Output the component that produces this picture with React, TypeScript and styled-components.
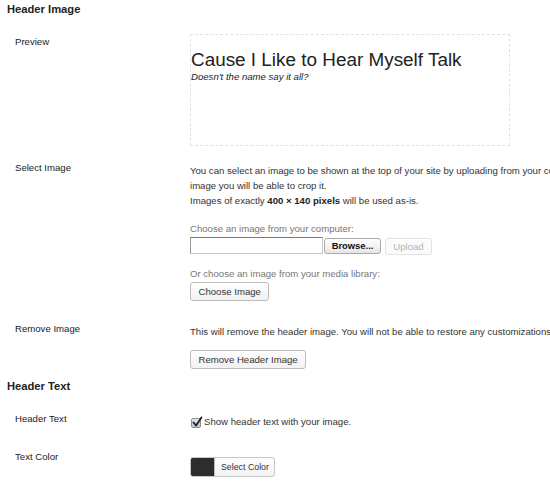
import { ReactElement, PropsWithChildren } from 'react';
import styled, { createGlobalStyle } from 'styled-components';

const GlobalStyle = createGlobalStyle`
  html,
  body {
    margin: 0;
    padding: 0;
    background: #fff;
    overflow: hidden;
  }
  body {
    font-family: 'Liberation Sans', Arial, sans-serif;
    font-size: 9.6px;
    color: #333;
  }
`;

const Page = styled.div`
  padding: 2px 0 0 7px;
  width: 900px;
`;

const Heading = styled.h3`
  margin: 0 0 11px;
  font-size: 11.2px;
  line-height: 14px;
  font-weight: bold;
  color: #222;
`;

const RowWrap = styled.div`
  display: grid;
  grid-template-columns: 175px 1fr;
  padding: 7px 0 7px 8px;
`;

const Label = styled.div`
  line-height: 15px;
  color: #222;
`;

const Field = styled.div`
  min-width: 0;
`;

interface IRowProps {
  label: string;
}

function Row({ label, children }: PropsWithChildren<IRowProps>): ReactElement {
  return (
    <RowWrap>
      <Label>{label}</Label>
      <Field>{children}</Field>
    </RowWrap>
  );
}

const PreviewBox = styled.div`
  box-sizing: border-box;
  width: 320px;
  height: 112px;
  border: 1px dashed #e2e2e2;
  padding-top: 14px;
`;

const SiteTitle = styled.div`
  font-size: 18.9px;
  line-height: 22px;
  color: #222;
`;

const SiteTagline = styled.div`
  font-size: 9.6px;
  line-height: 12px;
  font-style: italic;
  color: #222;
`;

const Desc = styled.p`
  margin: 3px 0 0;
  line-height: 15px;
  white-space: nowrap;
  color: #333;

  strong {
    color: #222;
  }
`;

const Hint = styled.p<{ $mt: number }>`
  margin: ${(p) => p.$mt}px 0 0;
  line-height: 15px;
  color: #777;
`;

const Actions = styled.div<{ $mt: number; $mb: number }>`
  display: flex;
  align-items: flex-start;
  margin: ${(p) => p.$mt}px 0 ${(p) => p.$mb}px;
`;

const FileBox = styled.div`
  box-sizing: border-box;
  width: 133px;
  height: 17px;
  border: 1px solid #c8c8c8;
  border-top-color: #7a7a7a;
  border-left-color: #9a9a9a;
  background: #fff;
`;

const BrowseButton = styled.div`
  box-sizing: border-box;
  width: 57px;
  height: 16px;
  margin: 1px 0 0 1px;
  border: 1px solid #a9a9a9;
  border-radius: 3px;
  background: linear-gradient(#ffffff, #e6e6e6);
  font-weight: bold;
  font-size: 9.4px;
  line-height: 14px;
  text-align: center;
  color: #111;
`;

const Button = styled.div<{ $disabled?: boolean }>`
  box-sizing: border-box;
  display: inline-block;
  height: 19px;
  padding: 0 7.5px;
  border: 1px solid ${(p) => (p.$disabled ? '#e2e2e2' : '#bdbdbd')};
  border-radius: 3px;
  background: ${(p) =>
    p.$disabled ? '#fbfbfb' : 'linear-gradient(#fefefe, #f2f2f2)'};
  box-shadow: inset 0 1px 0 #fff;
  line-height: 17px;
  font-size: 9.6px;
  color: ${(p) => (p.$disabled ? '#b4b4b4' : '#333')};
  white-space: nowrap;
`;

const UploadButton = styled(Button)`
  margin: 1px 0 0 4px;
  width: 47px;
  height: 17px;
  line-height: 15px;
  text-align: center;
  padding: 0;
`;

const CheckLine = styled.p`
  margin: 3px 0 6px;
  line-height: 15px;
  display: flex;
  align-items: center;
  color: #333;
`;

const CheckBox = styled.span`
  position: relative;
  box-sizing: border-box;
  width: 10px;
  height: 10px;
  margin: 2px 3px 0 1px;
  border: 1px solid #8a8f99;
  border-radius: 2px;
  background: linear-gradient(#e4e8ef, #b9c2d0);

  svg {
    position: absolute;
    left: -1px;
    top: -3px;
  }
`;

const ColorPicker = styled.div`
  display: inline-flex;
  box-sizing: border-box;
  height: 20.5px;
  margin-top: 7.5px;
  border: 1px solid #c6c6c6;
  border-radius: 3px;
  overflow: hidden;
  background: linear-gradient(#fefefe, #f3f3f3);
`;

const Swatch = styled.span<{ $color: string }>`
  width: 23px;
  background-color: ${(p) => p.$color};
  background-image: radial-gradient(#3a3a3a 0.6px, transparent 0.8px);
  background-size: 2px 2px;
  border-right: 1px solid #bbb;
`;

const ColorLabel = styled.span`
  padding: 0 5px 0 6px;
  font-size: 8.8px;
  line-height: 18.5px;
  color: #333;
`;

export default function App(): ReactElement {
  return (
    <Page>
      <GlobalStyle />
      <Heading>Header Image</Heading>

      <Row label="Preview">
        <PreviewBox>
          <SiteTitle>Cause I Like to Hear Myself Talk</SiteTitle>
          <SiteTagline>Doesn't the name say it all?</SiteTagline>
        </PreviewBox>
      </Row>

      <Row label="Select Image">
        <Desc>
          You can select an image to be shown at the top of your site by
          uploading from your computer or choosing from your media library.
          After selecting an
          <br />
          image you will be able to crop it.
          <br />
          Images of exactly <strong>400 × 140 pixels</strong> will be used
          as-is.
        </Desc>
        <Hint $mt={13}>Choose an image from your computer:</Hint>
        <Actions $mt={1} $mb={0}>
          <FileBox />
          <BrowseButton>Browse...</BrowseButton>
          <UploadButton $disabled>Upload</UploadButton>
        </Actions>
        <Hint $mt={10.5}>Or choose an image from your media library:</Hint>
        <Actions $mt={1.5} $mb={6}>
          <Button>Choose Image</Button>
        </Actions>
      </Row>

      <Row label="Remove Image">
        <Desc>
          This will remove the header image. You will not be able to restore
          any customizations.
        </Desc>
        <Actions $mt={11} $mb={3}>
          <Button>Remove Header Image</Button>
        </Actions>
      </Row>

      <Heading>Header Text</Heading>

      <Row label="Header Text">
        <CheckLine>
          <CheckBox>
            <svg width="12" height="12" viewBox="0 0 12 12">
              <path
                d="M2.5 6.5 L5 9.5 L10.5 1.5"
                fill="none"
                stroke="#1d1d1d"
                strokeWidth="1.8"
                strokeLinecap="round"
                strokeLinejoin="round"
              />
            </svg>
          </CheckBox>
          Show header text with your image.
        </CheckLine>
      </Row>

      <Row label="Text Color">
        <div>
          <ColorPicker>
            <Swatch $color="#222" />
            <ColorLabel>Select Color</ColorLabel>
          </ColorPicker>
        </div>
      </Row>
    </Page>
  );
}
